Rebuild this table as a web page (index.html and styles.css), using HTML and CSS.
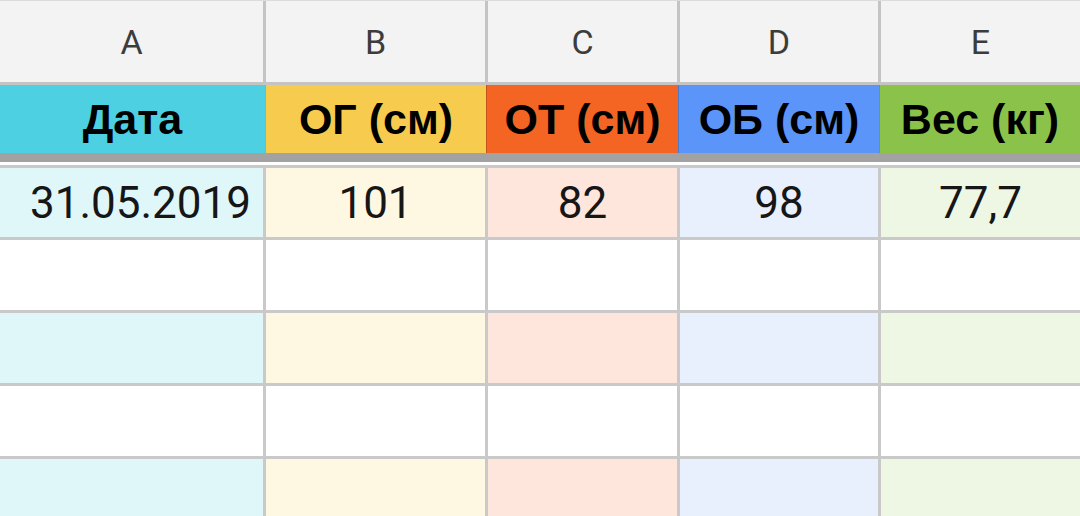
FILE: index.html
```html
<!DOCTYPE html>
<html lang="ru">
<head>
<meta charset="utf-8">
<title>Таблица</title>
<link rel="stylesheet" href="styles.css">
</head>
<body>
<div class="sheet">
  <div class="colhead">
    <div class="letter">A</div>
    <div class="letter">B</div>
    <div class="letter">C</div>
    <div class="letter">D</div>
    <div class="letter">E</div>
  </div>
  <div class="hdr">
    <div class="hcell c-cyan">Дата</div>
    <div class="hcell c-yellow">ОГ (см)</div>
    <div class="hcell c-orange">ОТ (см)</div>
    <div class="hcell c-blue">ОБ (см)</div>
    <div class="hcell c-green">Вес (кг)</div>
  </div>
  <div class="freeze"></div>
  <div class="grid">
    <div class="cell a-cyan date">31.05.2019</div>
    <div class="cell a-yellow">101</div>
    <div class="cell a-orange">82</div>
    <div class="cell a-blue">98</div>
    <div class="cell a-green">77,7</div>

    <div class="cell"></div>
    <div class="cell"></div>
    <div class="cell"></div>
    <div class="cell"></div>
    <div class="cell"></div>

    <div class="cell a-cyan"></div>
    <div class="cell a-yellow"></div>
    <div class="cell a-orange"></div>
    <div class="cell a-blue"></div>
    <div class="cell a-green"></div>

    <div class="cell"></div>
    <div class="cell"></div>
    <div class="cell"></div>
    <div class="cell"></div>
    <div class="cell"></div>

    <div class="cell a-cyan"></div>
    <div class="cell a-yellow"></div>
    <div class="cell a-orange"></div>
    <div class="cell a-blue"></div>
    <div class="cell a-green"></div>
  </div>
</div>
</body>
</html>
```

FILE: styles.css
```css
html, body {
  margin: 0;
  padding: 0;
  height: 516px;
  overflow: hidden;
  background: #ffffff;
}

.sheet {
  width: 1080px;
  display: flex;
  flex-direction: column;
}

.colhead {
  display: grid;
  grid-template-columns: 263px 219px 189px 198px 199px;
  column-gap: 3px;
  background: #c4c4c4;
  border-top: 1px solid #dcdcdc;
  padding-bottom: 3px;
}

.letter {
  height: 81px;
  background: #f3f3f3;
  display: flex;
  align-items: center;
  justify-content: center;
  font-family: Roboto, "Liberation Sans", sans-serif;
  font-size: 34px;
  color: #3c3c3c;
}

.hdr {
  display: grid;
  grid-template-columns: 265px 221px 192px 201px 201px;
}

.hcell {
  height: 68px;
  display: flex;
  align-items: center;
  justify-content: center;
  font-family: "Liberation Sans", Arial, sans-serif;
  font-weight: bold;
  font-size: 43px;
  color: #000000;
  box-sizing: border-box;
}

.hcell + .hcell {
  border-left: 1px solid rgba(0, 0, 0, 0.18);
}

.c-cyan { background: #4dd0e1; }
.c-yellow { background: #f7cb4d; }
.c-orange { background: #f46524; }
.c-blue { background: #5b95f9; }
.c-green { background: #8bc34a; }

.freeze {
  height: 9px;
  background: #a2a2a2;
  border-bottom: 3px solid #ffffff;
}

.grid {
  display: grid;
  grid-template-columns: 263px 219px 189px 198px 199px;
  grid-template-rows: 69px 70px 70px 70px 70px;
  gap: 3px;
  padding-top: 3px;
  background: #c9c9c9;
}

.cell {
  background: #ffffff;
  display: flex;
  align-items: center;
  justify-content: center;
  font-family: Roboto, "Liberation Sans", sans-serif;
  font-size: 44px;
  color: #161616;
}

.cell.date {
  justify-content: flex-end;
  padding-right: 12px;
}

.a-cyan { background: #e0f7fa; }
.a-yellow { background: #fef8e3; }
.a-orange { background: #ffe6dd; }
.a-blue { background: #e8f0fe; }
.a-green { background: #eef7e3; }
```
